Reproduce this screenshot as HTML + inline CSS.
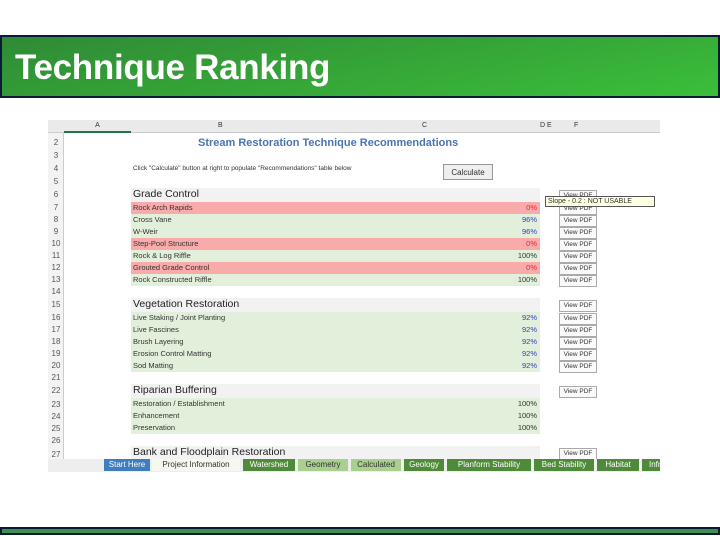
<!DOCTYPE html><html><head><meta charset="utf-8"><style>
*{margin:0;padding:0;box-sizing:border-box}
body{width:720px;height:540px;background:#fff;position:relative;overflow:hidden;font-family:"Liberation Sans",sans-serif}
.hdr{position:absolute;left:0;top:35px;width:720px;height:63px;border:2px solid #0c1a3a;background:linear-gradient(170deg,#2f8a35,#3bbf3a)}
.hdr span{position:absolute;left:13px;top:11px;color:#fff;font-weight:bold;font-size:35px;letter-spacing:-0.3px}
.foot{position:absolute;left:0;top:527px;width:720px;height:8px;border:2px solid #0c1a3a;background:#3f8f4f}
.s{position:absolute;left:48px;top:120px;width:612px;height:352px;background:#fff;font-size:8px;color:#333;overflow:hidden}
.a{position:absolute;white-space:nowrap}
.rn{position:absolute;left:0;width:16px;text-align:center;font-size:8px;color:#555}
.r{position:absolute;left:83px;width:409px;height:12px;line-height:12px;padding-left:2px;font-size:7.5px}
.g{background:#e2efda}.p{background:#f9aaaa}.h{background:#f2f2f2;font-size:10.5px;color:#222}
.v{position:absolute;right:3px;top:0}
.b{position:absolute;left:511px;width:38px;height:12px;border:1px solid #aaa;background:#fafafa;font-size:6.5px;text-align:center;line-height:10px;color:#333}
.tab{position:absolute;top:339px;height:12px;line-height:12px;font-size:8px;color:#fff;text-align:center;background:#4f8a3a}
</style></head><body>
<div class="hdr"><span>Technique Ranking</span></div>
<div class="s">
<div class="a" style="left:0;top:0;width:612px;height:13px;background:#eaeaea;border-bottom:1px solid #ccc"></div>
<div class="a" style="left:16px;top:0;width:67px;height:13px;border-bottom:2px solid #217346;text-align:center;font-size:7px;line-height:12px">A</div>
<div class="a" style="left:170px;top:2px;font-size:7px">B</div>
<div class="a" style="left:374px;top:2px;font-size:7px">C</div>
<div class="a" style="left:492px;top:2px;font-size:7px">D E</div>
<div class="a" style="left:526px;top:2px;font-size:7px">F</div>
<div class="a" style="left:0;top:13px;width:16px;height:339px;background:#f3f3f3;border-right:1px solid #ccc"></div>
<div class="a" style="left:150px;top:17px;font-size:11px;font-weight:bold;color:#4a74b0">Stream Restoration Technique Recommendations</div>
<div class="a" style="left:85px;top:45px;font-size:6.5px">Click "Calculate" button at right to populate "Recommendations" table below</div>
<div class="a" style="left:395px;top:44px;width:50px;height:16px;border:1px solid #999;background:#eee;font-size:8px;text-align:center;line-height:15px">Calculate</div>

<div class="rn" style="top:18px">2</div><div class="rn" style="top:31px">3</div><div class="rn" style="top:44px">4</div><div class="rn" style="top:57px">5</div><div class="rn" style="top:70px">6</div><div class="rn" style="top:83px">7</div><div class="rn" style="top:95px">8</div><div class="rn" style="top:107px">9</div><div class="rn" style="top:119px">10</div><div class="rn" style="top:131px">11</div><div class="rn" style="top:143px">12</div><div class="rn" style="top:155px">13</div><div class="rn" style="top:167px">14</div><div class="rn" style="top:180px">15</div><div class="rn" style="top:193px">16</div><div class="rn" style="top:205px">17</div><div class="rn" style="top:217px">18</div><div class="rn" style="top:229px">19</div><div class="rn" style="top:241px">20</div><div class="rn" style="top:253px">21</div><div class="rn" style="top:266px">22</div><div class="rn" style="top:280px">23</div><div class="rn" style="top:292px">24</div><div class="rn" style="top:304px">25</div><div class="rn" style="top:316px">26</div><div class="rn" style="top:330px">27</div>

<div class="r h" style="top:68px;height:14px">Grade Control</div>
<div class="r p" style="top:82px">Rock Arch Rapids<span class="v" style="color:#e03030">0%</span></div>
<div class="r g" style="top:94px">Cross Vane<span class="v" style="color:#3040c0">96%</span></div>
<div class="r g" style="top:106px">W-Weir<span class="v" style="color:#3040c0">96%</span></div>
<div class="r p" style="top:118px">Step-Pool Structure<span class="v" style="color:#e03030">0%</span></div>
<div class="r g" style="top:130px">Rock &amp; Log Riffle<span class="v">100%</span></div>
<div class="r p" style="top:142px">Grouted Grade Control<span class="v" style="color:#e03030">0%</span></div>
<div class="r g" style="top:154px">Rock Constructed Riffle<span class="v">100%</span></div>

<div class="r h" style="top:178px;height:14px">Vegetation Restoration</div>
<div class="r g" style="top:192px">Live Staking / Joint Planting<span class="v" style="color:#3040c0">92%</span></div>
<div class="r g" style="top:204px">Live Fascines<span class="v" style="color:#3040c0">92%</span></div>
<div class="r g" style="top:216px">Brush Layering<span class="v" style="color:#3040c0">92%</span></div>
<div class="r g" style="top:228px">Erosion Control Matting<span class="v" style="color:#3040c0">92%</span></div>
<div class="r g" style="top:240px">Sod Matting<span class="v" style="color:#3040c0">92%</span></div>

<div class="r h" style="top:264px;height:14px">Riparian Buffering</div>
<div class="r g" style="top:278px">Restoration / Establishment<span class="v">100%</span></div>
<div class="r g" style="top:290px">Enhancement<span class="v">100%</span></div>
<div class="r g" style="top:302px">Preservation<span class="v">100%</span></div>
<div class="r h" style="top:326px;height:14px">Bank and Floodplain Restoration</div>

<div class="b" style="top:70px">View PDF</div><div class="b" style="top:83px">View PDF</div><div class="b" style="top:95px">View PDF</div><div class="b" style="top:107px">View PDF</div><div class="b" style="top:119px">View PDF</div><div class="b" style="top:131px">View PDF</div><div class="b" style="top:143px">View PDF</div><div class="b" style="top:155px">View PDF</div>
<div class="b" style="top:180px">View PDF</div><div class="b" style="top:193px">View PDF</div><div class="b" style="top:205px">View PDF</div><div class="b" style="top:217px">View PDF</div><div class="b" style="top:229px">View PDF</div><div class="b" style="top:241px">View PDF</div>
<div class="b" style="top:266px">View PDF</div><div class="b" style="top:328px">View PDF</div>
<div class="a" style="left:497px;top:76px;width:110px;height:11px;background:#ffffe1;border:1px solid #555;font-size:7px;line-height:9px;padding-left:2px">Slope - 0.2 :  NOT USABLE</div>

<div class="a" style="left:0;top:339px;width:612px;height:13px;background:#eee"></div>
<div class="tab" style="left:56px;width:46px;background:#3f7cc0">Start Here</div>
<div class="tab" style="left:104px;width:88px;background:#f4f8f0;color:#333">Project Information</div>
<div class="tab" style="left:195px;width:52px">Watershed</div>
<div class="tab" style="left:250px;width:50px;background:#a9d08e;color:#333">Geometry</div>
<div class="tab" style="left:303px;width:50px;background:#a9d08e;color:#333">Calculated</div>
<div class="tab" style="left:356px;width:40px">Geology</div>
<div class="tab" style="left:399px;width:84px">Planform Stability</div>
<div class="tab" style="left:486px;width:60px">Bed Stability</div>
<div class="tab" style="left:549px;width:42px">Habitat</div>
<div class="tab" style="left:594px;width:30px">Infra</div>
</div>
<div class="foot"></div>
</body></html>
